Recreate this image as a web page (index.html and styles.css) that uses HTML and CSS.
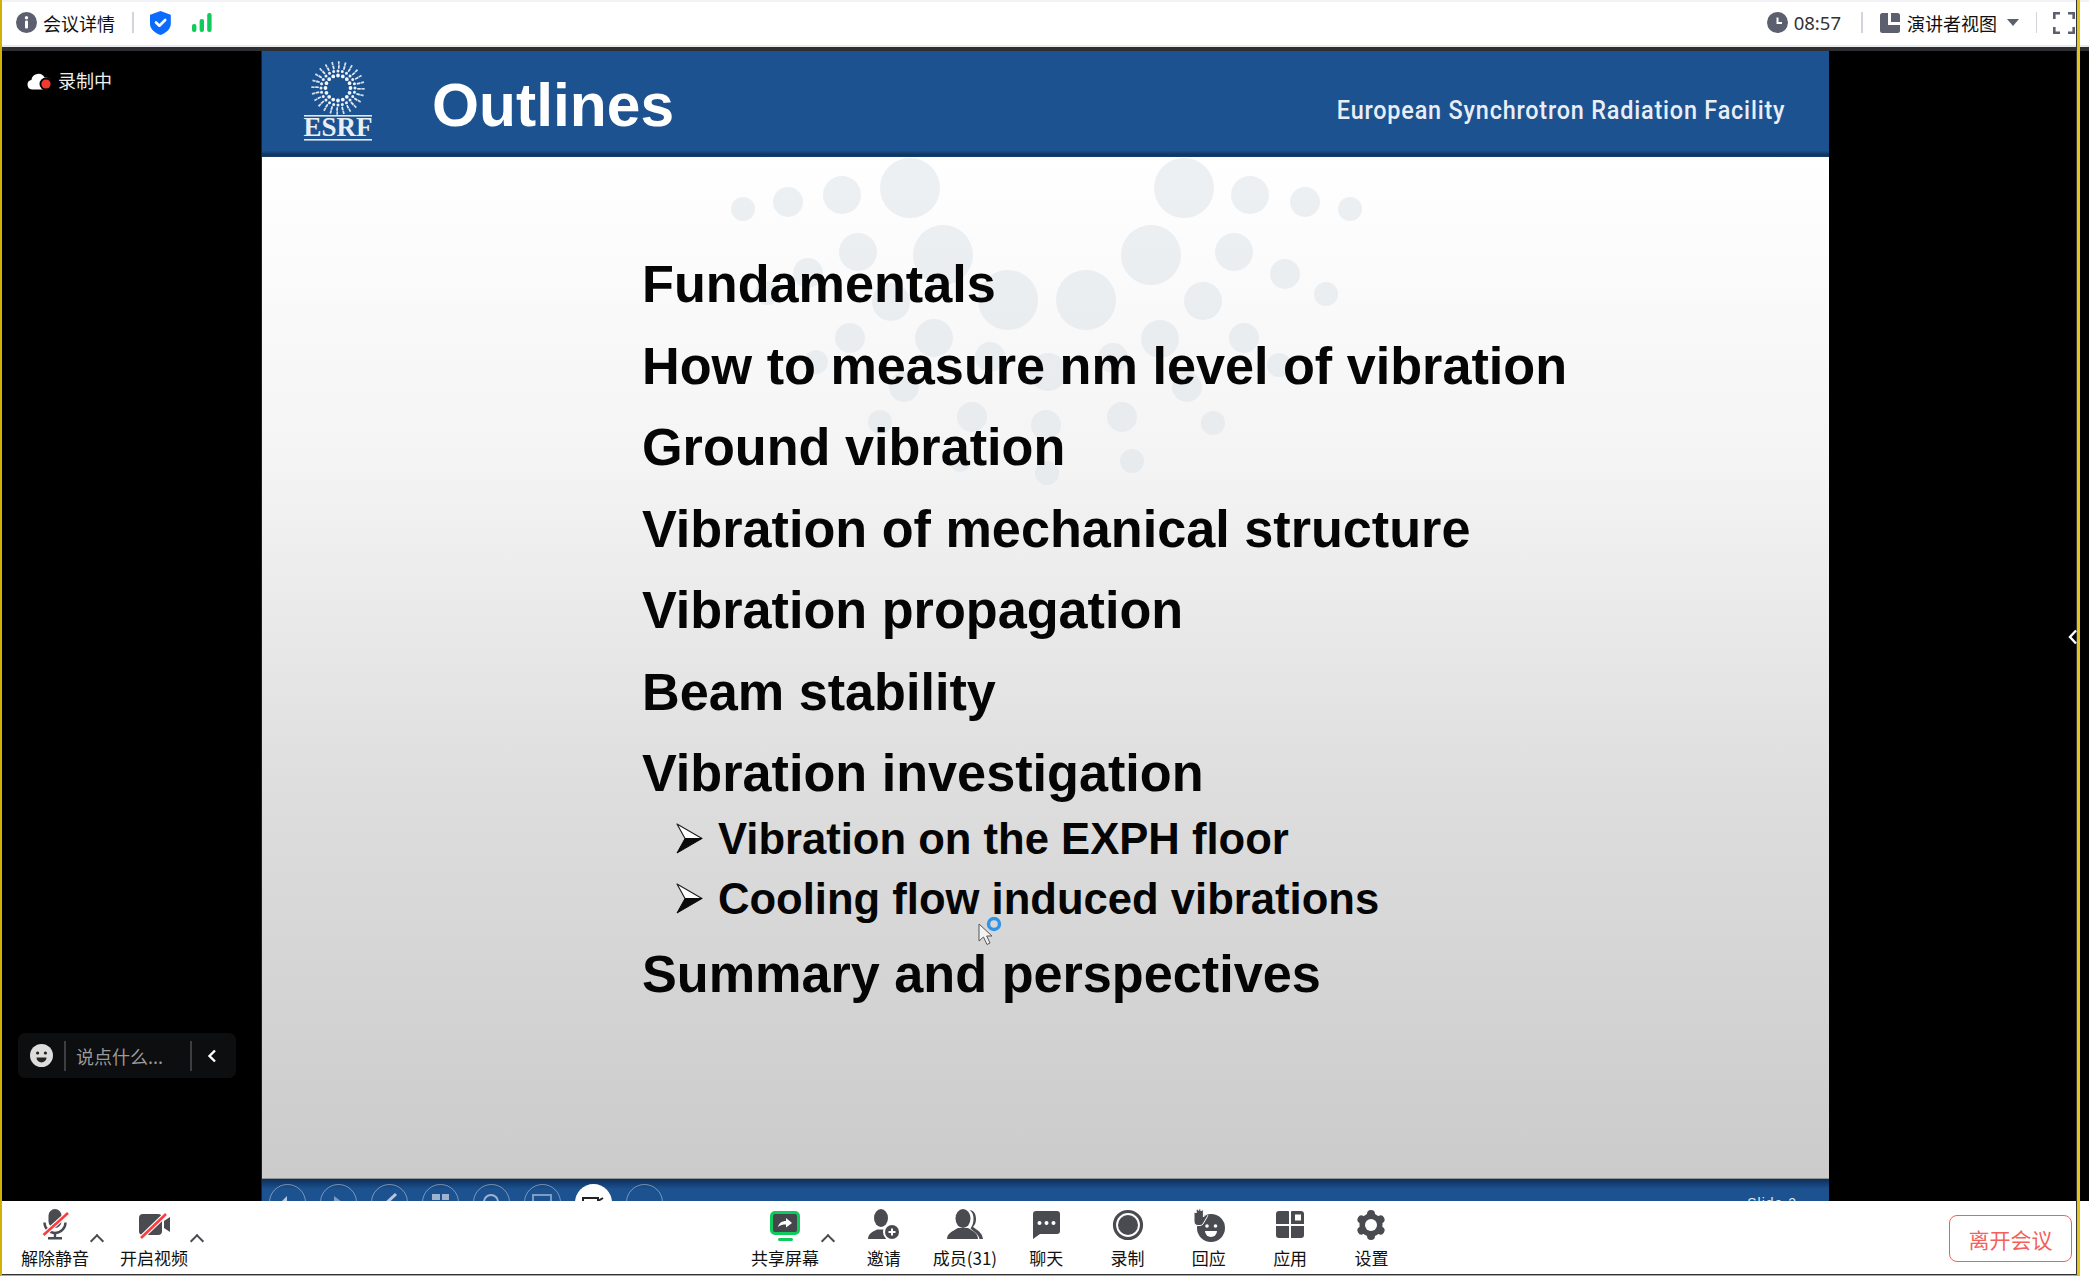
FILE: index.html
```html
<!DOCTYPE html>
<html lang="zh">
<head>
  <meta charset="UTF-8" />
  <title>会议</title>
  <link rel="stylesheet" href="styles.css">
</head>
<body>
  <header class="topbar">
    <div class="topbar-group">
      <svg class="icon-info" width="21" height="21" viewBox="0 0 21 21"><circle cx="10.5" cy="10.5" r="10.5" fill="#5b5f6e"/><circle cx="10.5" cy="5.8" r="1.7" fill="#fff"/><rect x="9" y="8.6" width="3" height="7.8" rx="1" fill="#fff"/></svg>
      <span class="meeting-title">会议详情</span>
      <span class="top-divider"></span>
      <svg class="icon-shield" width="21" height="24" viewBox="0 0 21 24"><path d="M10.5 0 L20 3.4 a1 1 0 0 1 .8 1 V13 c0 5-5 9-10.3 11 C5.2 22 0 18 0 13 V4.4 a1 1 0 0 1 .8-1z" fill="#0b6bff"/><path d="M6 11.5 l3.4 3.2 L15.2 9" fill="none" stroke="#fff" stroke-width="2.6" stroke-linecap="round" stroke-linejoin="round"/></svg>
      <svg class="icon-signal" width="20" height="19" viewBox="0 0 20 19"><rect x="0" y="11" width="4.4" height="8" rx="2" fill="#0ecb5b"/><rect x="7.6" y="6" width="4.4" height="13" rx="2" fill="#0ecb5b"/><rect x="15.2" y="0" width="4.4" height="19" rx="2" fill="#0ecb5b"/></svg>
    </div>
    <div class="topbar-group">
      <svg width="21" height="21" viewBox="0 0 21 21"><circle cx="10.5" cy="10.5" r="10.5" fill="#5b5f6e"/><path d="M10.5 5.5 V11 H15" fill="none" stroke="#fff" stroke-width="2"/></svg>
      <span class="clock">08:57</span>
      <span class="top-divider divider-clock"></span>
      <svg width="20" height="20" viewBox="0 0 20 20"><path d="M2.5 0 H8 V12 H20 V17.5 a2.5 2.5 0 0 1-2.5 2.5 H2.5 A2.5 2.5 0 0 1 0 17.5 V2.5 A2.5 2.5 0 0 1 2.5 0z M11 0 H17.5 A2.5 2.5 0 0 1 20 2.5 V9 H11z" fill="#5b5f6e"/></svg>
      <span class="view-label">演讲者视图</span>
      <span class="view-caret"></span>
      <span class="top-divider divider-view"></span>
      <svg width="22" height="22" viewBox="0 0 22 22" fill="none" stroke="#5b5f6e" stroke-width="2.6"><path d="M1.3 7 V1.3 H7 M15 1.3 H20.7 V7 M20.7 15 V20.7 H15 M7 20.7 H1.3 V15"/></svg>
    </div>
  </header>

  <main class="stage">
    <aside class="sidebar">
      <div class="rec-status">
        <svg width="25" height="19" viewBox="0 0 25 19"><path d="M5 18.5 a4.8 4.8 0 0 1-.6-9.5 A7 7 0 0 1 17.5 6.5 a6 6 0 0 1 2 12z" fill="#fff"/><circle cx="19" cy="13" r="6.5" fill="#000"/><circle cx="19" cy="13" r="4.6" fill="#f33a2e"/></svg>
        <span>录制中</span>
      </div>
      <div class="chat-pill">
        <svg width="23" height="23" viewBox="0 0 23 23"><circle cx="11.5" cy="11.5" r="11.5" fill="#ddd"/><circle cx="7.6" cy="9" r="1.6" fill="#222"/><circle cx="15.4" cy="9" r="1.6" fill="#222"/><path d="M6.5 13.4 h10 a5 5 0 0 1-10 0z" fill="#222"/></svg>
        <span class="chat-divider"></span>
        <span class="chat-text">说点什么...</span>
        <span class="chat-divider"></span>
        <svg class="chat-chevron" width="10" height="14" viewBox="0 0 10 14"><path d="M8 1.5 L2.5 7 L8 12.5" fill="none" stroke="#fff" stroke-width="2.4"/></svg>
      </div>
    </aside>

    <section class="slide">
      <div class="slide-header">
        <svg class="esrf-logo" width="76" height="84" viewBox="0 0 76 84">
          <circle cx="38" cy="28" r="12.5" fill="none" stroke="#f4f7fb" stroke-width="3.8" stroke-linecap="round" pathLength="16" stroke-dasharray="0 1"/>
          <circle cx="38" cy="28" r="17" fill="none" stroke="#eef3f9" stroke-width="3" stroke-linecap="round" pathLength="24" stroke-dasharray="0 1"/>
          <circle cx="38" cy="28" r="21" fill="none" stroke="#e2eaf4" stroke-width="3.6" pathLength="24" stroke-dasharray=".32 .68"/>
          <circle cx="38" cy="28" r="25" fill="none" stroke="#d3deec" stroke-width="3.4" pathLength="24" stroke-dasharray=".26 .74"/>
          <rect x="4" y="55" width="68" height="1.6" fill="#dfe7f2"/>
          <text x="38" y="76" text-anchor="middle" class="esrf-text">ESRF</text>
          <rect x="4" y="79" width="68" height="1.6" fill="#dfe7f2"/>
        </svg>
        <h1>Outlines</h1>
        <span class="slide-org">European Synchrotron Radiation Facility</span>
      </div>

      <div class="slide-body">
        <svg class="slide-dots" width="1568" height="1021" viewBox="261 157 1568 1021" fill="#dce3e8" fill-opacity=".55">
          <circle cx="743" cy="209" r="12"/><circle cx="788" cy="202" r="15"/><circle cx="842" cy="195" r="19"/><circle cx="910" cy="188" r="30"/>
          <circle cx="943" cy="255" r="30"/><circle cx="858" cy="252" r="19"/><circle cx="808" cy="273" r="15"/><circle cx="1008" cy="300" r="30"/>
          <circle cx="1086" cy="300" r="30"/><circle cx="891" cy="302" r="19"/><circle cx="767" cy="293" r="12"/><circle cx="850" cy="338" r="15"/>
          <circle cx="934" cy="338" r="19"/><circle cx="1151" cy="255" r="30"/><circle cx="1234" cy="252" r="19"/><circle cx="1285" cy="274" r="15"/>
          <circle cx="1326" cy="294" r="12"/><circle cx="1203" cy="301" r="19"/><circle cx="1160" cy="339" r="19"/><circle cx="1244" cy="338" r="15"/>
          <circle cx="1184" cy="188" r="30"/><circle cx="1250" cy="195" r="19"/><circle cx="1305" cy="202" r="15"/><circle cx="1350" cy="209" r="12"/>
          <circle cx="990" cy="357" r="15"/><circle cx="1048" cy="372" r="19"/><circle cx="1113" cy="358" r="15"/><circle cx="1187" cy="387" r="15"/>
          <circle cx="1279" cy="365" r="12"/><circle cx="904" cy="387" r="15"/><circle cx="816" cy="362" r="12"/><circle cx="972" cy="417" r="15"/>
          <circle cx="1046" cy="425" r="15"/><circle cx="880" cy="422" r="12"/><circle cx="1122" cy="417" r="15"/><circle cx="1213" cy="423" r="12"/>
          <circle cx="1132" cy="461" r="12"/><circle cx="1047" cy="473" r="12"/><circle cx="960" cy="462" r="10"/>
        </svg>

        <div class="outline">
          <p>Fundamentals</p>
          <p>How to measure nm level of vibration</p>
          <p>Ground vibration</p>
          <p>Vibration of mechanical structure</p>
          <p>Vibration propagation</p>
          <p>Beam stability</p>
          <p>Vibration investigation</p>
          <ul class="sub-outline">
            <li>
              <svg width="27" height="31" viewBox="0 0 27 31"><path d="M1 1 L26 15.5 H9z" fill="#fff" stroke="#222" stroke-width="1.2" stroke-linejoin="round"/><path d="M1 30 L26 15.5 H9z" fill="#0a0a0a" stroke="#0a0a0a" stroke-linejoin="round"/></svg>
              Vibration on the EXPH floor
            </li>
            <li>
              <svg width="27" height="31" viewBox="0 0 27 31"><path d="M1 1 L26 15.5 H9z" fill="#fff" stroke="#222" stroke-width="1.2" stroke-linejoin="round"/><path d="M1 30 L26 15.5 H9z" fill="#0a0a0a" stroke="#0a0a0a" stroke-linejoin="round"/></svg>
              Cooling flow induced vibrations
            </li>
          </ul>
          <p>Summary and perspectives</p>
        </div>

        <svg class="busy-cursor" width="28" height="30" viewBox="0 0 28 30">
          <path d="M1 7 V24 L5.5 20 L9 27.5 L12 26 L8.7 19 H14z" fill="#f4f4f4" stroke="#555" stroke-width="1"/>
          <circle cx="16" cy="7" r="5.5" fill="none" stroke="#2f94e8" stroke-width="3.4"/>
        </svg>
      </div>

      <div class="slide-controls">
        <span class="ctl"><svg width="34" height="34" viewBox="0 0 34 34"><path d="M10 18 L17 11 V25z" fill="#b9c8dc"/></svg></span>
        <span class="ctl"><svg width="34" height="34" viewBox="0 0 34 34"><path d="M13 11 L21 17 L13 23z" fill="#7f9cc2"/></svg></span>
        <span class="ctl"><svg width="34" height="34" viewBox="0 0 34 34"><path d="M10 22 L24 9" stroke="#b9c8dc" stroke-width="3"/></svg></span>
        <span class="ctl"><svg width="34" height="34" viewBox="0 0 34 34"><path d="M9 9 h8 v6 h-8z M19 9 h7 v6 h-7z" fill="#9fb3cf"/></svg></span>
        <span class="ctl"><svg width="34" height="34" viewBox="0 0 34 34"><circle cx="17" cy="17" r="7" fill="none" stroke="#9fb3cf" stroke-width="2"/></svg></span>
        <span class="ctl"><svg width="34" height="34" viewBox="0 0 34 34"><rect x="8" y="10" width="18" height="14" fill="none" stroke="#7f9cc2" stroke-width="2"/></svg></span>
        <span class="ctl ctl-active"><svg width="34" height="34" viewBox="0 0 34 34"><path d="M7 19 V13 h15 v6 M22 16 l5-3" fill="none" stroke="#222" stroke-width="2"/></svg></span>
        <span class="ctl"></span>
        <span class="slide-number">Slide 2</span>
      </div>
    </section>

    <div class="side-right"></div>
  </main>

  <footer class="toolbar">
    <div class="tool-group">
      <div class="tool">
        <svg class="tool-icon" viewBox="0 0 40 34">
          <rect x="13.5" y="1" width="13" height="19" rx="6.5" fill="#4a4b50"/>
          <path d="M9.5 14.5 a10.5 10.5 0 0 0 21 0" fill="none" stroke="#4a4b50" stroke-width="2.4"/>
          <path d="M20 25 V29.5 M13 30.2 H27" fill="none" stroke="#4a4b50" stroke-width="2.4"/>
          <path d="M8.5 27 L33 5" stroke="#fff" stroke-width="5"/>
          <path d="M8.5 27 L33 5" stroke="#ff3c3c" stroke-width="2.6"/>
        </svg>
        <span>解除静音</span>
      </div>
      <span class="caret caret-audio"></span>
      <div class="tool">
        <svg class="tool-icon" viewBox="0 0 40 34">
          <rect x="5" y="6" width="23" height="21" rx="4" fill="#4a4b50"/>
          <path d="M30 13 L36 9 V24 L30 20z" fill="#4a4b50"/>
          <path d="M7 30 L32 6" stroke="#fff" stroke-width="5"/>
          <path d="M7 30 L32 6" stroke="#ff3c3c" stroke-width="2.6"/>
        </svg>
        <span>开启视频</span>
      </div>
      <span class="caret caret-video"></span>
    </div>

    <div class="tool-group tool-center">
      <div class="tool">
        <svg class="tool-icon" viewBox="0 0 40 34">
          <rect x="6.5" y="4.5" width="27" height="21" rx="3.5" fill="#45464b" stroke="#0ecb5b" stroke-width="3"/>
          <path d="M13 19 c1-4 4-6 8-6 V10 l6 5 -6 4.5 V16.5 c-3 0-6 .5-8 2.5z" fill="#fff"/>
          <rect x="13" y="30" width="15" height="3" rx="1.5" fill="#0ecb5b"/>
        </svg>
        <span>共享屏幕</span>
      </div>
      <span class="caret caret-share"></span>
      <div class="tool tool-fixed">
        <svg class="tool-icon" viewBox="0 0 40 34">
          <ellipse cx="17" cy="10" rx="7" ry="9" fill="#4a4b50"/>
          <path d="M4 31 c0-5 4-7 9-9.5 h8 c5 2.5 9 4.5 9 9.5z" fill="#4a4b50"/>
          <circle cx="28" cy="24" r="9" fill="#fff"/>
          <circle cx="28" cy="24" r="7" fill="#4a4b50"/>
          <path d="M24.5 24 h7 M28 20.5 v7" stroke="#fff" stroke-width="2"/>
        </svg>
        <span>邀请</span>
      </div>
      <div class="tool tool-fixed">
        <svg class="tool-icon" viewBox="0 0 40 34">
          <path d="M24 2 c4 0 7 3 7 9 c0 3-1 6-3 8 c4 3 9 5 10 12 h-3.5 c-1-5-5-7-9-10.5 c2-3 3-6 3-9.5 c0-4-1-7-4-9z" fill="#4a4b50"/>
          <ellipse cx="18" cy="10.5" rx="7.5" ry="9.5" fill="#4a4b50"/>
          <path d="M2 31 c0-6 6-8 11-11 h10 c5 3 10 5 10 11z" fill="#4a4b50"/>
        </svg>
        <span>成员(31)</span>
      </div>
      <div class="tool tool-fixed">
        <svg class="tool-icon" viewBox="0 0 40 34">
          <path d="M10 3 H31 a3 3 0 0 1 3 3 V23 a3 3 0 0 1-3 3 H14 L7 31 V6 a3 3 0 0 1 3-3z" fill="#4a4b50"/>
          <circle cx="13.5" cy="15" r="2" fill="#fff"/><circle cx="20.5" cy="15" r="2" fill="#fff"/><circle cx="27.5" cy="15" r="2" fill="#fff"/>
        </svg>
        <span>聊天</span>
      </div>
      <div class="tool tool-fixed">
        <svg class="tool-icon" viewBox="0 0 40 34">
          <circle cx="20" cy="17" r="13.5" fill="none" stroke="#4a4b50" stroke-width="3.2"/>
          <circle cx="20" cy="17" r="10" fill="#4a4b50"/>
        </svg>
        <span>录制</span>
      </div>
      <div class="tool tool-fixed">
        <svg class="tool-icon" viewBox="0 0 40 34">
          <circle cx="22" cy="20" r="14" fill="#4a4b50"/>
          <path d="M5 5 a1.2 1.2 0 0 1 2.2 0 V2.5 a1.2 1.2 0 0 1 2.4 0 V2 a1.2 1.2 0 0 1 2.4 0 V3 a1.2 1.2 0 0 1 2.4 0 V9 l2-2 a1.2 1.2 0 0 1 2 1.5 L14 16 a4 4 0 0 1-3 1.5 H9 c-3 0-4-2-4-5z" fill="#4a4b50" stroke="#fff" stroke-width="1"/>
          <circle cx="18" cy="18" r="1.8" fill="#fff"/><circle cx="26.5" cy="18" r="1.8" fill="#fff"/>
          <path d="M16 23 h12 a6 6 0 0 1-12 0z" fill="#fff"/>
        </svg>
        <span>回应</span>
      </div>
      <div class="tool tool-fixed">
        <svg class="tool-icon" viewBox="0 0 40 34">
          <path d="M9 3 h9 a1 1 0 0 1 1 1 V16 H6 V6 a3 3 0 0 1 3-3z" fill="#4a4b50"/>
          <path d="M24 3 h7 a3 3 0 0 1 3 3 V16 H21 V4 a1 1 0 0 1 1-1z" fill="#4a4b50"/>
          <rect x="25" y="6.5" width="6" height="6" fill="#fff"/>
          <path d="M6 18 H19 V30 H9 a3 3 0 0 1-3-3z" fill="#4a4b50"/>
          <path d="M21 18 H34 V27 a3 3 0 0 1-3 3 H21z" fill="#4a4b50"/>
        </svg>
        <span>应用</span>
      </div>
      <div class="tool tool-fixed">
        <svg class="tool-icon" viewBox="0 0 40 34">
          <circle cx="20" cy="17" r="11.5" fill="#4a4b50"/>
          <path d="M20 6 V28 M10.5 11.5 L29.5 22.5 M10.5 22.5 L29.5 11.5" stroke="#4a4b50" stroke-width="8" stroke-linecap="round"/>
          <circle cx="20" cy="17" r="6" fill="#fff"/>
        </svg>
        <span>设置</span>
      </div>
    </div>

    <button class="leave-btn">离开会议</button>
  </footer>

  <div class="window-frame"></div>
  <svg class="panel-chevron" width="10" height="16" viewBox="0 0 10 16"><path d="M8 1.5 L2 8 L8 14.5" fill="none" stroke="#fff" stroke-width="2.4"/></svg>
</body>
</html>
```

FILE: styles.css
```css
* {
  box-sizing: border-box;
}
body {
  margin: 0;
  height: 100vh;
  overflow: hidden;
  position: relative;
  display: flex;
  flex-direction: column;
  background-color: #fff;
  color: #111;
  font-family: "Noto Sans CJK SC", "Noto Sans", sans-serif;
}

/* top bar */
.topbar {
  display: flex;
  justify-content: space-between;
  align-items: center;
  height: 51px;
  padding: 2px 14px 6px 16px;
  background-color: #fff;
  border-top: 2px solid #f1f1f6;
  border-bottom: 4px solid #2d2f33;
  box-shadow: inset 0 -2px 0 #e8eaee;
  flex-shrink: 0;
}
.topbar-group {
  display: flex;
  align-items: center;
}
.meeting-title {
  font-size: 18px;
  margin-left: 6px;
}
.top-divider {
  width: 2px;
  height: 21px;
  background-color: #d3d5da;
  margin: 0 16px 0 17px;
}
.icon-signal {
  margin-left: 21px;
}
.clock {
  font-family: "Noto Sans", sans-serif;
  font-size: 18.5px;
  margin-left: 6px;
  color: #333;
}
.divider-clock {
  margin: 0 17px 0 20px;
}
.view-label {
  font-size: 18px;
  margin-left: 7px;
}
.view-caret {
  width: 0;
  height: 0;
  margin-left: 10px;
  border-left: 6px solid transparent;
  border-right: 6px solid transparent;
  border-top: 7px solid #5b5f6e;
}
.divider-view {
  margin: 0 16px 0 17px;
  width: 1px;
}

/* stage */
.stage {
  flex: 1;
  display: flex;
  background-color: #000;
  min-height: 0;
}
.sidebar {
  width: 261px;
  flex-shrink: 0;
  display: flex;
  flex-direction: column;
  justify-content: space-between;
  padding: 16px 0 123px 18px;
  background-color: #000;
}
.rec-status {
  display: flex;
  align-items: center;
  gap: 6px;
  padding-left: 9px;
  color: #eee;
  font-size: 18px;
}
.chat-pill {
  display: flex;
  align-items: center;
  width: 218px;
  height: 45px;
  padding: 0 0 0 12px;
  background-color: #0d0e10;
  border-radius: 7px;
}
.chat-divider {
  width: 2px;
  height: 30px;
  background-color: #3d3e42;
}
.chat-pill svg:first-child {
  margin-right: 11px;
}
.chat-text {
  width: 124px;
  padding-left: 10px;
  font-size: 18px;
  color: #9a9a9a;
  flex-shrink: 0;
  white-space: nowrap;
}
.chat-chevron {
  margin-left: 15px;
}
.side-right {
  flex: 1;
}

/* slide */
.slide {
  width: 1568px;
  flex-shrink: 0;
  display: flex;
  flex-direction: column;
  border-left: 1px solid #14233a;
  font-family: "Liberation Sans", Arial, sans-serif;
}
.slide-header {
  height: 106px;
  display: flex;
  align-items: center;
  padding: 0 44px 0 38px;
  background: linear-gradient(#1c5290 0, #1c5290 94%, #0f3560 98%, #17406f 100%);
  flex-shrink: 0;
}
.esrf-logo {
  margin-top: -4px;
  flex-shrink: 0;
}
.esrf-text {
  font-family: "Liberation Serif", serif;
  font-weight: bold;
  font-size: 27px;
  fill: #e8eef6;
}
.slide-header h1 {
  margin: 2px 0 0 56px;
  font-size: 60.5px;
  font-weight: bold;
  color: #fff;
}
.slide-org {
  margin-left: auto;
  margin-top: 12px;
  font-family: Roboto, sans-serif;
  font-weight: 500;
  font-size: 26px;
  letter-spacing: 0.9px;
  color: #e9eef6;
  transform: scaleX(0.9);
  transform-origin: right center;
  white-space: nowrap;
}
.slide-body {
  position: relative;
  height: 1021px;
  flex-shrink: 0;
  background: linear-gradient(#fff 0, #f4f4f4 30%, #ddd 63%, #cbcbcb 100%);
}
.slide-dots {
  position: absolute;
  left: -1px;
  top: 0;
}
.outline {
  position: relative;
  padding: 87px 0 0 380px;
  color: #050505;
  font-weight: bold;
}
.outline p {
  margin: 0;
  font-size: 52.2px;
  line-height: 81.5px;
}
.sub-outline {
  list-style: none;
  margin: -6px 0 5px;
  padding: 0 0 0 34px;
  font-size: 43.6px;
  line-height: 60px;
}
.sub-outline li {
  display: flex;
  align-items: center;
  gap: 15px;
}
.busy-cursor {
  position: absolute;
  left: 716px;
  top: 760px;
}

/* blue strip under the slide, cut off by the toolbar */
.slide-controls {
  flex: 1;
  display: flex;
  gap: 14px;
  padding: 5px 32px 0 7px;
  overflow: hidden;
  background: linear-gradient(#0d2f57 0, #1c5290 45%);
  border-top: 1px solid #8f9499;
}
.ctl {
  width: 37px;
  height: 37px;
  border-radius: 50%;
  border: 1.5px solid rgba(255, 255, 255, 0.4);
  flex-shrink: 0;
}
.ctl-active {
  background-color: #fff;
}
.slide-number {
  margin-left: auto;
  margin-top: 11px;
  font-size: 14px;
  letter-spacing: 1px;
  color: #dfe7f2;
}

/* bottom toolbar */
.toolbar {
  height: 75px;
  flex-shrink: 0;
  display: flex;
  align-items: flex-start;
  padding: 7px 17px 0 21px;
  background-color: #fff;
}
.tool-group {
  display: flex;
  align-items: flex-start;
}
.tool-center {
  margin-left: 549px;
}
.tool {
  display: flex;
  flex-direction: column;
  align-items: center;
  font-size: 17px;
  line-height: 23px;
  white-space: nowrap;
}
.tool-fixed {
  width: 81.3px;
}
.tool-icon {
  width: 40px;
  height: 34px;
  margin-bottom: 4px;
}
.caret {
  width: 10px;
  height: 10px;
  margin-top: 28px;
  border-left: 2.5px solid #4a4b50;
  border-top: 2.5px solid #4a4b50;
  transform: rotate(45deg);
}
.caret-audio {
  margin-left: 3px;
  margin-right: 18px;
}
.caret-video {
  margin-left: 4px;
}
.caret-share {
  margin-left: 4px;
  margin-right: 10px;
}
.leave-btn {
  margin: 7px 0 0 auto;
  width: 123px;
  height: 47px;
  padding: 0;
  background-color: #fff;
  border: 1.5px solid #ff5a55;
  border-radius: 8px;
  color: #f4605c;
  font-family: inherit;
  font-size: 21px;
}

/* overlays */
.window-frame {
  position: absolute;
  left: 0;
  top: 0;
  width: 2080px;
  height: 1276px;
  border-left: 2px solid #d4b106;
  border-right: 3px solid #e3c41a;
  border-bottom: 1px solid #d4b106;
  box-shadow: inset -1px -1px 0 #333;
  pointer-events: none;
}
.panel-chevron {
  position: absolute;
  left: 2068px;
  top: 629px;
}
```
